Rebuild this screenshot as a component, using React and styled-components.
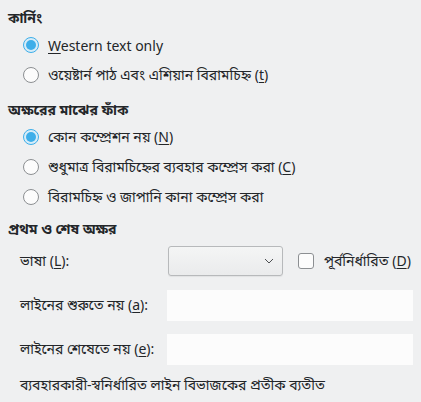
import styled, { createGlobalStyle } from "styled-components";

const Global = createGlobalStyle`
  html, body {
    margin: 0;
    background: #eff0f1;
  }
  body {
    font-family: "Noto Sans", "Noto Sans Bengali", "Lohit Bengali", sans-serif;
    font-size: 14px;
    color: #232629;
  }
`;

const Page = styled.div`
  width: 421px;
  height: 402px;
  box-sizing: border-box;
  padding: 6px 8px 0 8px;
  display: flex;
  flex-direction: column;
`;

const Heading = styled.div`
  font-weight: 700;
  height: 24px;
  line-height: 24px;
`;

const Options = styled.div`
  display: flex;
  flex-direction: column;
  padding-left: 15px;
  margin-bottom: ${({ $after }) => $after}px;
`;

const Option = styled.label`
  display: flex;
  align-items: center;
  gap: 9px;
  height: 30px;
`;

const Radio = styled.span`
  width: 16px;
  height: 16px;
  box-sizing: border-box;
  border-radius: 50%;
  flex-shrink: 0;
  border: 1px solid ${({ $on }) => ($on ? "#3daee9" : "#8c8f92")};
  background: ${({ $on }) => ($on ? "#d6ecf8" : "#fcfcfc")};
  display: flex;
  align-items: center;
  justify-content: center;
  &::after {
    content: "";
    width: 10px;
    height: 10px;
    border-radius: 50%;
    background: #3daee9;
    display: ${({ $on }) => ($on ? "block" : "none")};
  }
`;

const Key = styled.u`
  text-decoration-thickness: 1px;
  text-underline-offset: 2px;
`;

const Form = styled.div`
  display: grid;
  grid-template-columns: 147px 1fr;
  grid-auto-rows: 32px;
  row-gap: 12px;
  padding-left: 12px;
  margin-top: 4px;
  align-items: center;
`;

const FieldLabel = styled.div`
  line-height: 32px;
`;

const Inline = styled.div`
  display: flex;
  align-items: center;
  gap: 10px;
`;

const Combo = styled.div`
  width: 115px;
  height: 30px;
  box-sizing: border-box;
  margin-left: 1px;
  border: 1px solid #b7b9bb;
  border-radius: 3px;
  background: linear-gradient(#f4f5f5, #eaebec);
  box-shadow: 0 1px 1px rgba(0, 0, 0, 0.06);
  display: flex;
  align-items: center;
  justify-content: flex-end;
  padding-right: 8px;
`;

const Check = styled.span`
  width: 16px;
  height: 16px;
  box-sizing: border-box;
  border: 1px solid #8c8f92;
  border-radius: 3px;
  background: #fcfcfc;
  margin-left: 5px;
`;

const Input = styled.div`
  height: 31px;
  background: #fcfcfc;
`;

const Note = styled.div`
  padding-left: 12px;
  margin-top: 10px;
  line-height: 20px;
`;

function Chevron() {
  return (
    <svg width="10" height="6" viewBox="0 0 10 6">
      <path d="M1 1l4 4 4-4" fill="none" stroke="#4d4f52" strokeWidth="1" />
    </svg>
  );
}

export default function App() {
  return (
    <Page>
      <Global />
      <Heading>কার্নিং</Heading>
      <Options $after={8}>
        <Option>
          <Radio $on />
          <span>
            <Key>W</Key>estern text only
          </span>
        </Option>
        <Option>
          <Radio />
          <span>
            ওয়েষ্টার্ন পাঠ এবং এশিয়ান বিরামচিহ্ন (<Key>t</Key>)
          </span>
        </Option>
      </Options>

      <Heading>অক্ষরের মাঝের ফাঁক</Heading>
      <Options $after={5}>
        <Option>
          <Radio $on />
          <span>
            কোন কম্প্রেশন নয় (<Key>N</Key>)
          </span>
        </Option>
        <Option>
          <Radio />
          <span>
            শুধুমাত্র বিরামচিহ্নের ব্যবহার কম্প্রেস করা (<Key>C</Key>)
          </span>
        </Option>
        <Option>
          <Radio />
          <span>বিরামচিহ্ন ও জাপানি কানা কম্প্রেস করা</span>
        </Option>
      </Options>

      <Heading>প্রথম ও শেষ অক্ষর</Heading>
      <Form>
        <FieldLabel>
          ভাষা (<Key>L</Key>):
        </FieldLabel>
        <Inline>
          <Combo>
            <Chevron />
          </Combo>
          <Check />
          <span>
            পূর্বনির্ধারিত (<Key>D</Key>)
          </span>
        </Inline>
        <FieldLabel>
          লাইনের শুরুতে নয় (<Key>a</Key>):
        </FieldLabel>
        <Input />
        <FieldLabel>
          লাইনের শেষেতে নয় (<Key>e</Key>):
        </FieldLabel>
        <Input />
      </Form>
      <Note>ব্যবহারকারী-স্বনির্ধারিত লাইন বিভাজকের প্রতীক ব্যতীত</Note>
    </Page>
  );
}
